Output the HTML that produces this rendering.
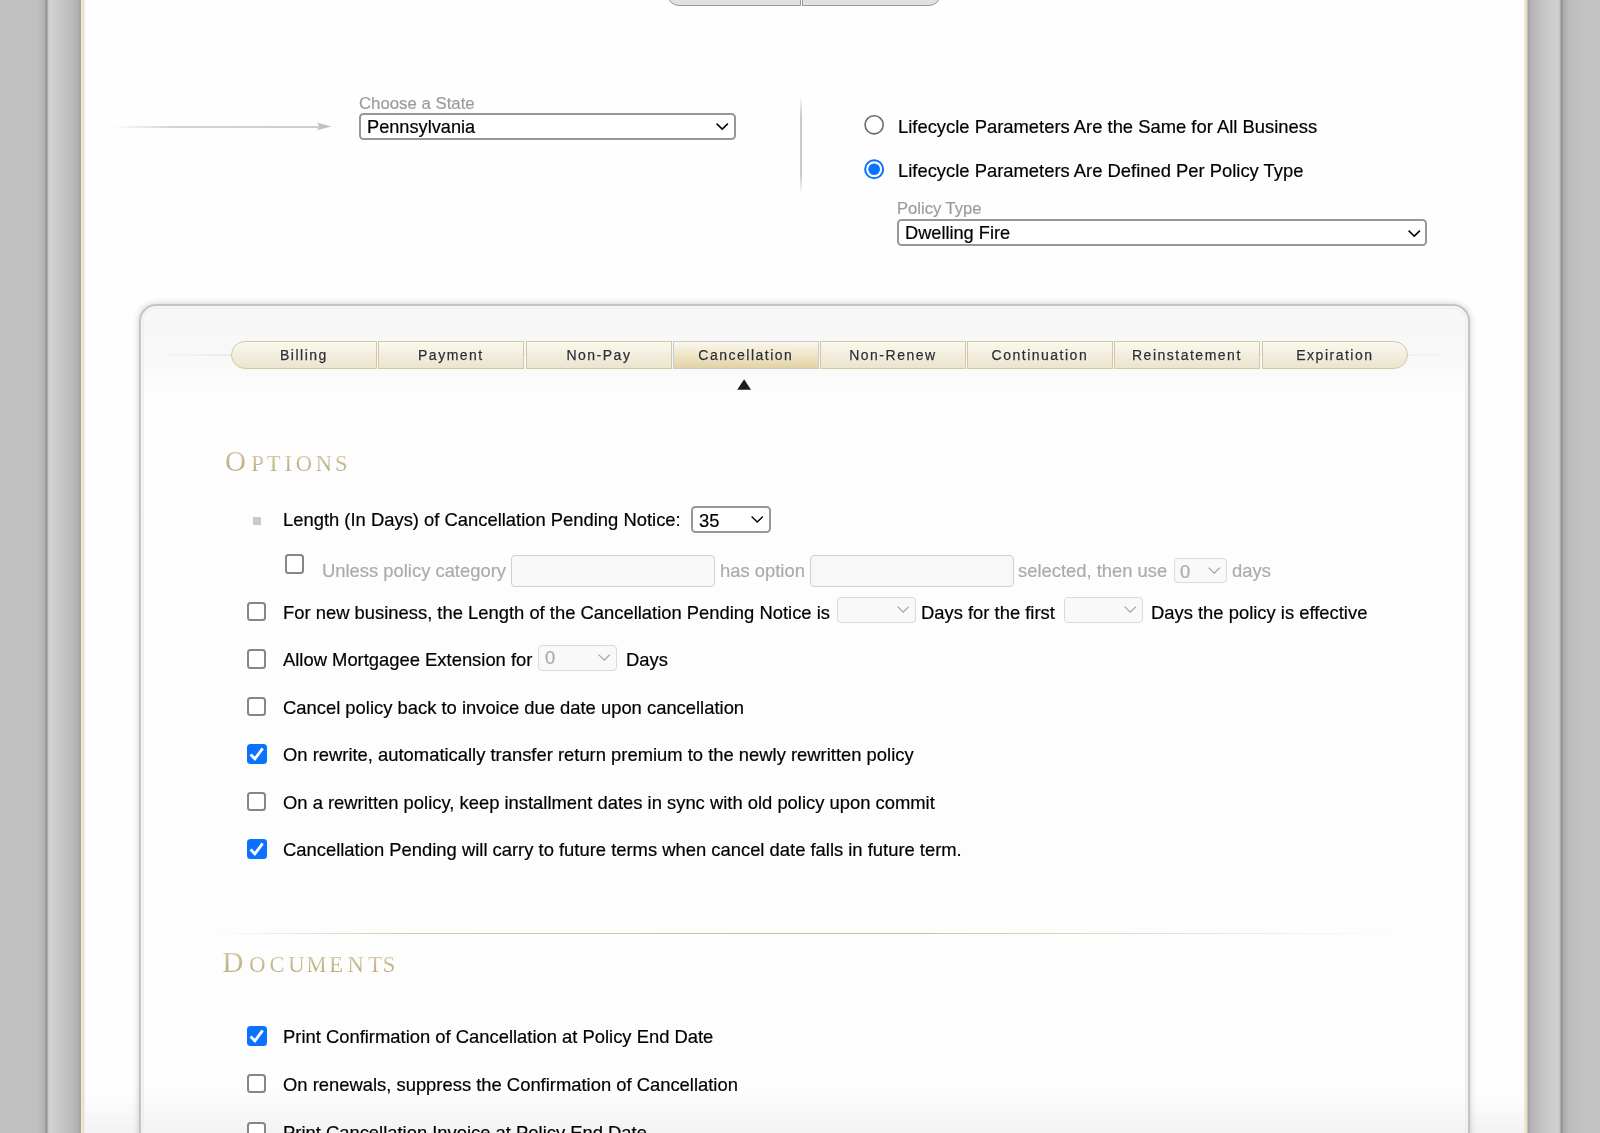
<!DOCTYPE html>
<html><head><meta charset="utf-8">
<style>
*{box-sizing:border-box;margin:0;padding:0}
html,body{width:1600px;height:1133px;overflow:hidden}
body{position:relative;background:#c2c2c2;font-family:"Liberation Sans",sans-serif;color:#000}
.a{position:absolute}
.t{position:absolute;white-space:pre;will-change:transform;-webkit-text-stroke:0.2px currentColor;font-size:18.4px;line-height:20px;color:#000}
.g{color:#ababab}
.sel{position:absolute;border:2px solid #979797;border-radius:4.5px;background:#fff}
.dsel{position:absolute;border:1.5px solid #dadada;border-radius:4px;background:#f9f9f9}
.inp{position:absolute;border:1.5px solid #cfcfcf;border-radius:4px;background:#f8f8f8}
.cb{position:absolute;width:19.3px;height:19.5px;border:2px solid #868686;border-radius:3.5px;background:#fff}
.cbx{position:absolute;width:19.8px;height:19.8px;border-radius:3.5px;background:#0a72ff}
.cbx svg{position:absolute;left:0;top:0}
.tab{position:absolute;will-change:transform;top:340.8px;height:27.8px;width:145.8px;border:1.5px solid #d4c7a2;background:linear-gradient(to bottom,#faf8f0,#f2eddd 50%,#ebe4cf);
 font-size:14px;letter-spacing:1.5px;color:#2e2e2e;-webkit-text-stroke:0.25px #2e2e2e;text-align:center;line-height:26px;text-shadow:0 0 2px #fff,0 0 1px #fff}
.tab.act{border-color:#c8cacd;background:linear-gradient(to bottom,#fbf7ec,#efe4c6 50%,#e2d3a5)}
.hd{position:absolute;font-family:"Liberation Serif",serif;line-height:1;-webkit-background-clip:text;background-clip:text;color:transparent;
 background-image:linear-gradient(to bottom,#d6cb9f,#bdb07c 55%,#b5a873 75%,#cbc095);opacity:0.9}
#frameL{left:0;top:0;width:85px;height:1133px;background:linear-gradient(to right,#c1c1c1 0px,#c0c0c0 38px,#b0b0b0 45px,#949494 46px,#939393 47px,#c6c6c6 48px,#d3d3d3 50px,#c8c8c8 60px,#bdbdbd 70px,#b1b1b1 78px,#a3a3a3 80px,#a8a59e 81px,#efe8d8 81.5px,#ebe3d1 83px,#e6ddc9 84px,#fbfaf6 85px)}
#frameR{left:1524px;top:0;width:76px;height:1133px;background:linear-gradient(to right,#f6f3ea 0px,#ece3cf 1px,#e8dec8 3px,#a2a2a2 4px,#a2a2a2 4.5px,#b0b0b0 6px,#bfbfbf 14px,#c9c9c9 22px,#d1d1d1 34px,#c6c6c6 35px,#c4c4c4 36px,#939393 37px,#909090 38px,#a8a8a8 39px,#bdbdbd 45px,#c3c3c3 60px,#c3c3c3 76px)}
#page{left:85px;top:0;width:1439px;height:1133px;background:#fefefe}
#panel{left:139px;top:304px;width:1331px;height:900px;border:2px solid #c3c3c3;border-radius:17px;
 background:linear-gradient(to bottom,#f7f7f7 0px,#f8f8f8 44px,#f9f9f9 60px,#fbfbfb 74px,#fdfdfd 80px,#fdfdfd 100%);
 box-shadow:0 0 7px rgba(0,0,0,0.2), inset 0 0 0 1.5px #f6f6f6, inset 0 0 0 3px #efefef}
#fade{left:85px;top:1092px;width:1439px;height:41px;background:linear-gradient(to bottom,rgba(240,240,240,0),rgba(238,238,238,0.7))}
#fade2{left:141px;top:1092px;width:1327px;height:41px;background:linear-gradient(to bottom,rgba(240,240,240,0),rgba(238,238,238,0.7))}
</style></head><body>
<div class="a" id="frameL"></div><div class="a" id="frameR"></div><div class="a" id="page"></div>
<div class="a" style="left:667px;top:-20px;width:134px;height:26px;border:1.5px solid #9a9b9f;border-radius:0 0 0 12px;background:#dfe0e2"></div>
<div class="a" style="left:802px;top:-20px;width:139px;height:26px;border:1.5px solid #9a9b9f;border-radius:0 0 12px 0;background:#dfe0e2"></div>
<div class="a" style="left:112px;top:125.5px;width:208px;height:2px;background:linear-gradient(to right,rgba(210,210,210,0),#d4d4d4 60px,#cdcdcd)"></div>
<svg class="a" style="left:316px;top:122px" width="16" height="9" viewBox="0 0 16 9"><path d="M1 0.6 L15.5 4.4 L1 8.2 L3.4 4.4 Z" fill="#c0c0c0"/></svg>
<div class="t" style="left:359px;top:93.8px;font-size:16.8px;color:#9c9c9c">Choose a State</div>
<div class="sel" style="left:359px;top:113px;width:377px;height:27px"></div>
<div class="t" style="left:366.5px;top:117.2px;font-size:18.2px">Pennsylvania</div>
<svg class="a" style="left:714.3px;top:121.2px" width="16.5" height="10.5" viewBox="0 0 16.5 10.5"><path d="M2.6 2.6 L8.25 8.1 L13.9 2.6" fill="none" stroke="#000" stroke-width="1.5"/></svg>
<div class="a" style="left:800px;top:96px;width:1.5px;height:98px;background:linear-gradient(to bottom,rgba(200,200,200,0),#c9c9c9 20px,#c9c9c9 78px,rgba(200,200,200,0))"></div>
<svg class="a" style="left:862px;top:113px" width="24" height="72" viewBox="0 0 24 72"><circle cx="12.15" cy="11.8" r="9.05" fill="#fff" stroke="#6b6b6b" stroke-width="1.6"/><circle cx="12.15" cy="56.25" r="9" fill="#fff" stroke="#0a72ff" stroke-width="2"/><circle cx="12.15" cy="56.25" r="5.85" fill="#0a72ff"/></svg>
<div class="t" style="left:898px;top:117px">Lifecycle Parameters Are the Same for All Business</div>
<div class="t" style="left:898px;top:161px">Lifecycle Parameters Are Defined Per Policy Type</div>
<div class="t" style="left:897px;top:199px;font-size:16.6px;color:#9c9c9c">Policy Type</div>
<div class="sel" style="left:896.5px;top:219px;width:530.5px;height:27px"></div>
<div class="t" style="left:904.5px;top:222.5px;font-size:18.2px">Dwelling Fire</div>
<svg class="a" style="left:1405.5px;top:227.5px" width="16.5" height="10.5" viewBox="0 0 16.5 10.5"><path d="M2.6 2.6 L8.25 8.1 L13.9 2.6" fill="none" stroke="#000" stroke-width="1.5"/></svg>
<div class="a" id="fade"></div>
<div class="a" id="panel"></div>
<div class="a" id="fade2"></div>
<div class="a" style="left:150px;top:354.3px;width:1310px;height:2px;background:linear-gradient(to right,rgba(236,236,236,0),#ebebeb 80px,#ebebeb 1230px,rgba(236,236,236,0))"></div>
<div class="tab" style="left:231.20px;border-radius:14px 0 0 14px;">Billing</div>
<div class="tab" style="left:378.39px;">Payment</div>
<div class="tab" style="left:525.58px;">Non-Pay</div>
<div class="tab act" style="left:672.77px;">Cancellation</div>
<div class="tab" style="left:819.96px;">Non-Renew</div>
<div class="tab" style="left:967.15px;">Continuation</div>
<div class="tab" style="left:1114.34px;">Reinstatement</div>
<div class="tab" style="left:1261.53px;border-radius:0 14px 14px 0;">Expiration</div>
<svg class="a" style="left:736px;top:378px" width="16" height="13" viewBox="0 0 16 13"><path d="M8.1 1.2 L15 11.8 L1.2 11.8 Z" fill="#1f1b1b"/></svg>
<div class="hd" style="left:215.60px;top:447.21px;width:40px;font-size:29px;text-align:center">O</div>
<div class="hd" style="left:237.55px;top:452.66px;width:40px;font-size:22.5px;text-align:center">P</div>
<div class="hd" style="left:253.55px;top:452.66px;width:40px;font-size:22.5px;text-align:center">T</div>
<div class="hd" style="left:268.35px;top:452.66px;width:40px;font-size:22.5px;text-align:center">I</div>
<div class="hd" style="left:283.75px;top:452.66px;width:40px;font-size:22.5px;text-align:center">O</div>
<div class="hd" style="left:303.80px;top:452.66px;width:40px;font-size:22.5px;text-align:center">N</div>
<div class="hd" style="left:321.30px;top:452.66px;width:40px;font-size:22.5px;text-align:center">S</div>
<div class="hd" style="left:213.10px;top:948.11px;width:40px;font-size:29px;text-align:center">D</div>
<div class="hd" style="left:237.25px;top:953.56px;width:40px;font-size:22.5px;text-align:center">O</div>
<div class="hd" style="left:256.90px;top:953.56px;width:40px;font-size:22.5px;text-align:center">C</div>
<div class="hd" style="left:276.25px;top:953.56px;width:40px;font-size:22.5px;text-align:center">U</div>
<div class="hd" style="left:296.40px;top:953.56px;width:40px;font-size:22.5px;text-align:center">M</div>
<div class="hd" style="left:316.00px;top:953.56px;width:40px;font-size:22.5px;text-align:center">E</div>
<div class="hd" style="left:335.70px;top:953.56px;width:40px;font-size:22.5px;text-align:center">N</div>
<div class="hd" style="left:355.00px;top:953.56px;width:40px;font-size:22.5px;text-align:center">T</div>
<div class="hd" style="left:368.90px;top:953.56px;width:40px;font-size:22.5px;text-align:center">S</div>
<div class="a" style="left:215px;top:932.5px;width:1180px;height:1.3px;background:linear-gradient(to right,rgba(220,205,165,0),#d8c69a 200px,#d5c193 700px,rgba(220,205,165,0))"></div>
<div class="a" style="left:253px;top:517.4px;width:7.8px;height:7.8px;background:#c9c9c9"></div>
<div class="t" style="left:283.0px;top:510.10px;">Length (In Days) of Cancellation Pending Notice:</div>
<div class="sel" style="left:691px;top:506px;width:80px;height:27px"></div>
<div class="t" style="left:699.2px;top:510.50px;">35</div>
<svg class="a" style="left:749.2px;top:514.3px" width="16.5" height="10.5" viewBox="0 0 16.5 10.5"><path d="M2.6 2.6 L8.25 8.1 L13.9 2.6" fill="none" stroke="#000" stroke-width="1.4"/></svg>
<div class="cb" style="left:285.2px;top:554.1px"></div>
<div class="t g" style="left:321.6px;top:561.10px;">Unless policy category</div>
<div class="inp" style="left:511.25px;top:554.5px;width:203.25px;height:32.5px"></div>
<div class="t g" style="left:719.5px;top:561.10px;">has option</div>
<div class="inp" style="left:810px;top:554.5px;width:203.6px;height:32.5px"></div>
<div class="t g" style="left:1018.4px;top:561.10px;">selected, then use</div>
<div class="dsel" style="left:1173.9px;top:557.8px;width:53.2px;height:25.6px"></div>
<div class="t g" style="left:1180.3px;top:561.70px;">0</div>
<svg class="a" style="left:1205.5px;top:565px" width="16.5" height="10.5" viewBox="0 0 16.5 10.5"><path d="M2.6 2.6 L8.25 8.1 L13.9 2.6" fill="none" stroke="#a0a0a0" stroke-width="1.2"/></svg>
<div class="t g" style="left:1232.3px;top:561.10px;">days</div>
<div class="cb" style="left:247.0px;top:601.5px"></div>
<div class="t" style="left:283.0px;top:602.60px;">For new business, the Length of the Cancellation Pending Notice is</div>
<div class="dsel" style="left:837.15px;top:597.35px;width:78.75px;height:25.55px"></div>
<svg class="a" style="left:895.2px;top:604.2px" width="16.5" height="10.5" viewBox="0 0 16.5 10.5"><path d="M2.6 2.6 L8.25 8.1 L13.9 2.6" fill="none" stroke="#a0a0a0" stroke-width="1.2"/></svg>
<div class="t" style="left:920.9px;top:602.60px;">Days for the first</div>
<div class="dsel" style="left:1064px;top:597.35px;width:78.7px;height:25.55px"></div>
<svg class="a" style="left:1122.1px;top:604.2px" width="16.5" height="10.5" viewBox="0 0 16.5 10.5"><path d="M2.6 2.6 L8.25 8.1 L13.9 2.6" fill="none" stroke="#a0a0a0" stroke-width="1.2"/></svg>
<div class="t" style="left:1150.5px;top:602.60px;">Days the policy is effective</div>
<div class="cb" style="left:247.0px;top:649.2px"></div>
<div class="t" style="left:283.3px;top:650.20px;">Allow Mortgagee Extension for</div>
<div class="dsel" style="left:538.4px;top:645.1px;width:78.8px;height:25.55px"></div>
<div class="t g" style="left:544.8px;top:648.20px;">0</div>
<svg class="a" style="left:596.1px;top:652px" width="16.5" height="10.5" viewBox="0 0 16.5 10.5"><path d="M2.6 2.6 L8.25 8.1 L13.9 2.6" fill="none" stroke="#a0a0a0" stroke-width="1.2"/></svg>
<div class="t" style="left:626.2px;top:650.20px;">Days</div>
<div class="cb" style="left:247.0px;top:696.8000000000001px"></div>
<div class="t" style="left:283.1px;top:697.90px;">Cancel policy back to invoice due date upon cancellation</div>
<div class="cbx" style="left:246.8px;top:744.4px"><svg width="20" height="20" viewBox="0 0 20 20"><path d="M3.6 10.4 L7.9 14.8 L15.7 4.3" fill="none" stroke="#fff" stroke-width="2.8" stroke-linecap="butt" stroke-linejoin="miter"/></svg></div>
<div class="t" style="left:283.1px;top:745.10px;">On rewrite, automatically transfer return premium to the newly rewritten policy</div>
<div class="cb" style="left:247.0px;top:791.8000000000001px"></div>
<div class="t" style="left:283.1px;top:792.90px;">On a rewritten policy, keep installment dates in sync with old policy upon commit</div>
<div class="cbx" style="left:246.8px;top:839.4px"><svg width="20" height="20" viewBox="0 0 20 20"><path d="M3.6 10.4 L7.9 14.8 L15.7 4.3" fill="none" stroke="#fff" stroke-width="2.8" stroke-linecap="butt" stroke-linejoin="miter"/></svg></div>
<div class="t" style="left:283.1px;top:840.10px;">Cancellation Pending will carry to future terms when cancel date falls in future term.</div>
<div class="cbx" style="left:246.8px;top:1026.3px"><svg width="20" height="20" viewBox="0 0 20 20"><path d="M3.6 10.4 L7.9 14.8 L15.7 4.3" fill="none" stroke="#fff" stroke-width="2.8" stroke-linecap="butt" stroke-linejoin="miter"/></svg></div>
<div class="t" style="left:283.1px;top:1027.00px;">Print Confirmation of Cancellation at Policy End Date</div>
<div class="cb" style="left:247.0px;top:1073.8999999999999px"></div>
<div class="t" style="left:283.1px;top:1075.00px;">On renewals, suppress the Confirmation of Cancellation</div>
<div class="cb" style="left:247.0px;top:1121.6px"></div>
<div class="t" style="left:283.1px;top:1122.70px;">Print Cancellation Invoice at Policy End Date</div>
</body></html>
